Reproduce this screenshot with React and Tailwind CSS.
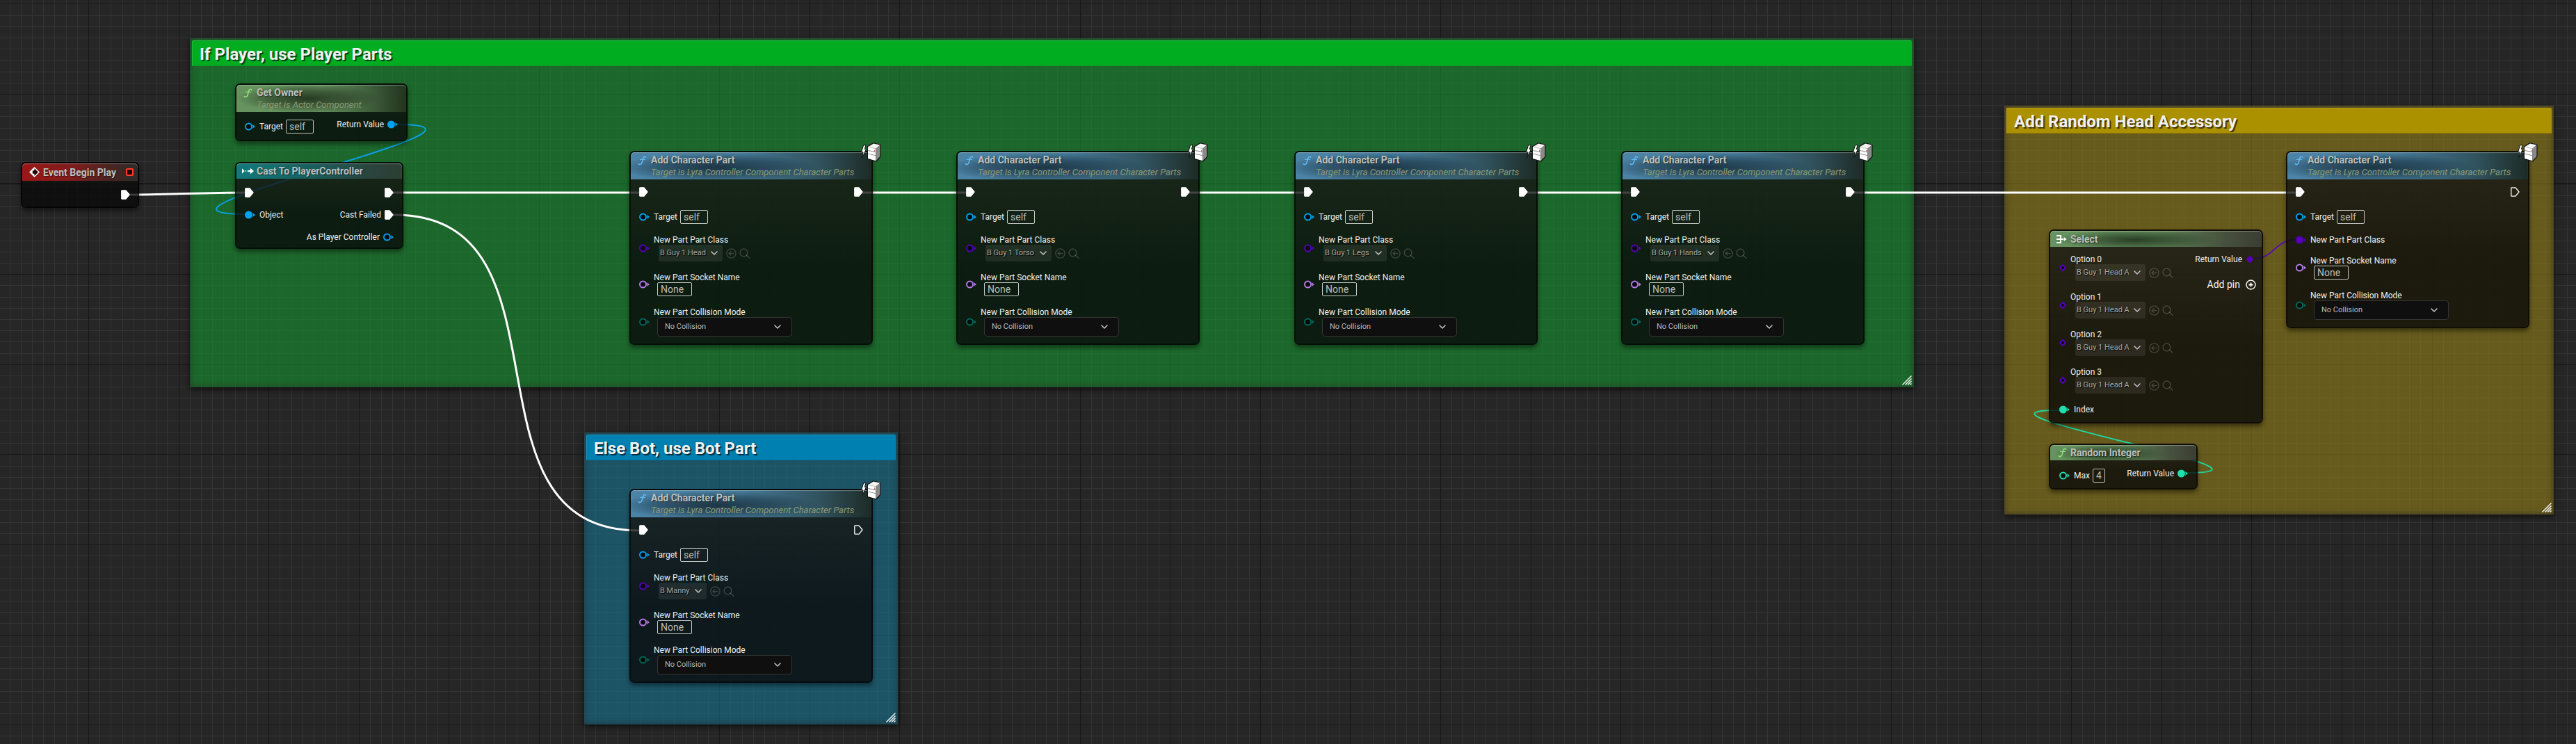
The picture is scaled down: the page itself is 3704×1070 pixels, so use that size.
import { useId } from "react";

/* ---------- canvas geometry ---------- */

const GRID_STEP = 129.6 / 8;
const GRID_W = 4096;
const GRID_H = 2304;

function gridPaths() {
  let minor = "";
  let major = "";
  for (let i = -8; ; i++) {
    const x = Math.round(127 + i * GRID_STEP);
    if (x > GRID_W) break;
    if (x < 0) continue;
    if (i % 8 === 0) major += `M${x} 0h1v${GRID_H}h-1z`;
    else minor += `M${x} 0h1v${GRID_H}h-1z`;
  }
  for (let i = -9; ; i++) {
    const y = Math.round(135 + i * GRID_STEP);
    if (y > GRID_H) break;
    if (y < 0 || i === 8) continue;
    if (i % 8 === 0) major += `M0 ${y}h${GRID_W}v1h${-GRID_W}z`;
    else minor += `M0 ${y}h${GRID_W}v1h${-GRID_W}z`;
  }
  return { minor, major };
}

const GRID = gridPaths();

function Grid() {
  return (
    <svg className="absolute top-0 left-0" width={GRID_W} height={GRID_H} shapeRendering="crispEdges" aria-hidden="true">
      <path d={GRID.minor} fill="#343434" />
      <path d={GRID.major} fill="#181818" />
      <path d={`M0 264h${GRID_W}v1h${-GRID_W}z`} fill="#050505" />
    </svg>
  );
}

function Wires() {
  return (
    <svg className="absolute top-0 left-0" width={GRID_W} height={GRID_H} fill="none" aria-hidden="true">
      <g stroke="#ffffff" strokeWidth="3">
        <path d="M184 280C240 280 290 277 356 277" />
        <path d="M564 277H922" />
        <path d="M1236 277H1392" />
        <path d="M1706 277H1878" />
        <path d="M2192 277H2348" />
        <path d="M2662 277H3304" />
        <path d="M564 309H567C837 309 649 763 919 763H924" />
      </g>
      <g strokeWidth="2">
        <path d="M566 179H571C773 179 150 308 352 308H356" stroke="#0a9fe0" />
        <path d="M3140 680H3145C3320 680 2786 590 2961 590H2966" stroke="#1fd6a0" />
        <path d="M3236 372H3240C3270 372 3271 345 3301 345H3306" stroke="#5a0fa8" />
      </g>
    </svg>
  );
}

/* ---------- pins and icons ---------- */

const PIN_COLORS = {
  object: "#00a1ee",
  class: "#5500b8",
  name: "#b87be8",
  enum: "#00665a",
  int: "#1fe0ae",
};

function ExecPin({ filled }) {
  return (
    <svg className="shrink-0" width="13" height="14" viewBox="0 0 13 14" aria-hidden="true">
      <path
        d="M1.5 .8H7L12 7L7 13.2H1.5Q.8 13.2 .8 12.5V1.5Q.8 .8 1.5 .8Z"
        fill={filled ? "#ffffff" : "none"}
        stroke="#ffffff"
        strokeWidth="1.3"
        strokeLinejoin="round"
      />
    </svg>
  );
}

function Pin({ type, filled }) {
  const color = PIN_COLORS[type];
  return (
    <svg className="shrink-0" width="15" height="12" viewBox="0 0 15 12" aria-hidden="true">
      <circle cx="5.5" cy="6" r="4.5" fill={filled ? color : "#040a08"} stroke={color} strokeWidth="2" />
      <path d="M11.2 3L15 6L11.2 9Q12.2 6 11.2 3Z" fill={color} />
    </svg>
  );
}

function DiamondPin({ filled }) {
  return (
    <svg className="shrink-0" width="10" height="12" viewBox="0 0 10 12" aria-hidden="true">
      <path
        d="M5 2L9 6L5 10L1 6Z"
        fill={filled ? PIN_COLORS.class : "#040a08"}
        stroke={PIN_COLORS.class}
        strokeWidth="2"
      />
    </svg>
  );
}

function FunctionIcon({ color }) {
  return (
    <svg className="shrink-0" width="13" height="14" viewBox="0 0 13 14" fill="none" stroke={color} aria-hidden="true">
      <path d="M11.6 2.2Q11.4 1.2 10.2 1.2Q8.2 1.2 7.4 4.6L6.2 9.4Q5.4 12.6 3 12.6Q1.6 12.6 1.3 11.6" strokeWidth="1.6" strokeLinecap="round" />
      <path d="M3.6 5.4H10.2" strokeWidth="1.4" strokeLinecap="round" />
    </svg>
  );
}

function EventIcon() {
  return (
    <svg className="shrink-0" width="15" height="15" viewBox="0 0 15 15" aria-hidden="true">
      <path d="M7.5 1L14 7.5L7.5 14L1 7.5Z" fill="#240505" stroke="#ffffff" strokeWidth="1.5" strokeLinejoin="round" />
      <path d="M7.5 1V5.3H4.8V9.7H7.5V14L1 7.5Z" fill="#ffffff" />
      <path d="M7.5 4.2L10.8 7.5L7.5 10.8V9H5.4V6H7.5Z" fill="#240505" />
    </svg>
  );
}

function CastIcon() {
  return (
    <svg className="shrink-0" width="17" height="10" viewBox="0 0 17 10" aria-hidden="true">
      <path d="M0 1.2L3.6 5L0 8.8Z" fill="#ffffff" />
      <path d="M4.4 4H6V6H4.4ZM6.8 4H8.4V6H6.8Z" fill="#ffffff" opacity=".6" />
      <path d="M9 3.8H12V.8L17 5L12 9.2V6.2H9Z" fill="#ffffff" />
    </svg>
  );
}

function SelectIcon() {
  return (
    <svg className="shrink-0" width="15" height="14" viewBox="0 0 15 14" aria-hidden="true">
      <path d="M0 1H7V6H10V8H7V13H0V11H5V8H0V6H5V3H0Z" fill="#ffffff" />
      <path d="M10.6 4L14.6 7L10.6 10Z" fill="#ffffff" />
    </svg>
  );
}

function Chevron() {
  return (
    <svg className="pointer-events-none shrink-0" width="10" height="6" viewBox="0 0 10 6" fill="none" aria-hidden="true">
      <path d="M1 1L5 5L9 1" stroke="#c0c0c0" strokeWidth="1.6" strokeLinecap="round" strokeLinejoin="round" />
    </svg>
  );
}

function UseSelectedIcon() {
  return (
    <svg width="15" height="15" viewBox="0 0 15 15" fill="none" stroke="currentColor" strokeWidth="1.4" strokeLinecap="round" strokeLinejoin="round" aria-hidden="true">
      <circle cx="7.5" cy="7.5" r="6.6" />
      <path d="M11 7.5H4.2M6.6 4.9L4 7.5L6.6 10.1" />
    </svg>
  );
}

function BrowseIcon() {
  return (
    <svg width="16" height="15" viewBox="0 0 16 15" fill="none" stroke="currentColor" strokeWidth="1.5" strokeLinecap="round" aria-hidden="true">
      <circle cx="6.5" cy="6.5" r="5.4" />
      <path d="M10.6 10.4L15 14.2" />
    </svg>
  );
}

function AddPinIcon() {
  return (
    <svg width="15" height="15" viewBox="0 0 15 15" fill="none" stroke="#ffffff" aria-hidden="true">
      <circle cx="7.5" cy="7.5" r="6.5" strokeWidth="1.4" />
      <path d="M7.5 4.4V10.6M4.4 7.5H10.6" strokeWidth="1.8" />
    </svg>
  );
}

function ServerBadge() {
  return (
    <svg className="absolute -top-[14px] -right-[14px]" width="32" height="32" viewBox="0 0 32 32" aria-hidden="true">
      <path d="M6.6 4L10 3.4L8.4 9.4L10.4 9.8L4.8 21.6L6 14L3.6 13.6Z" fill="#ffffff" stroke="#101010" strokeWidth="1" strokeLinejoin="round" />
      <path d="M13 6L21 1.4L30.4 3.6V20L24.6 26.4L13 23Z" fill="#151515" stroke="#151515" strokeWidth="2.4" strokeLinejoin="round" />
      <path d="M13 6.2L21 1.4L30.4 3.6L24.4 8.8Z" fill="#f4f4f4" />
      <path d="M13 6.2L24.4 8.8V26.2L13 23Z" fill="#ffffff" />
      <path d="M24.4 8.8L30.4 3.6V20L24.4 26.2Z" fill="#8a8a8a" />
      <path d="M13.4 11.4L24 13.8M13.4 16.2L24 18.6" stroke="#8c8c8c" strokeWidth="1" />
      <path d="M13 6.2L24.4 8.8" stroke="#c4c4c4" strokeWidth=".8" />
      <path d="M22.6 10.4V13" stroke="#d06060" strokeWidth="1" />
    </svg>
  );
}

/* ---------- form controls ---------- */

function TextValue({ id, value, className }) {
  return (
    <input
      id={id}
      defaultValue={value}
      className={`h-5 rounded-[2px] border border-[#c4c8c4] bg-transparent pl-1 text-sm leading-none text-[#b9bdb9] outline-none ${className}`}
    />
  );
}

function ClassPicker({ id, value, className }) {
  return (
    <div className="ml-[7px] flex items-center gap-[5px]">
      <div className={`relative flex h-6 items-center rounded-[3px] bg-white/8 ${className}`}>
        <select
          id={id}
          defaultValue={value}
          className="h-6 w-full appearance-none bg-transparent pl-[2px] text-[11px] text-[#a4a8a4] outline-none [text-shadow:1px_1px_1px_#000]"
        >
          <option>{value}</option>
        </select>
        <span className="pointer-events-none absolute right-[7px]">
          <Chevron />
        </span>
      </div>
      <div className="flex gap-1 text-white/18">
        <button type="button" aria-label="Use selected asset">
          <UseSelectedIcon />
        </button>
        <button type="button" aria-label="Browse to asset">
          <BrowseIcon />
        </button>
      </div>
    </div>
  );
}

function ModePicker({ id }) {
  return (
    <div className="relative ml-[5px] flex h-7 w-[194px] items-center rounded border border-[#333533] bg-[#0f0f0f]">
      <select
        id={id}
        defaultValue="No Collision"
        className="h-full w-full appearance-none bg-transparent pl-[10px] text-[11px] text-[#b9b9b9] outline-none"
      >
        <option>No Collision</option>
      </select>
      <span className="pointer-events-none absolute right-[15px]">
        <Chevron />
      </span>
    </div>
  );
}

/* ---------- node shell ---------- */

const HEADERS = {
  blue: "bg-[radial-gradient(ellipse_42%_52%_at_36%_56%,rgba(26,50,64,.95),rgba(26,50,64,.55)_55%,rgba(26,50,64,0)),linear-gradient(90deg,#4c84a8,#457a99_45%,#31535f_78%,#1d2b26)]",
  green: "bg-[radial-gradient(ellipse_42%_52%_at_42%_50%,rgba(36,54,32,.95),rgba(36,54,32,.55)_55%,rgba(36,54,32,0)),linear-gradient(90deg,#66945f,#638f5d_50%,#3d5c3a_80%,#22331f)]",
  greenThin: "bg-[radial-gradient(ellipse_38%_60%_at_40%_56%,rgba(36,54,32,.9),rgba(36,54,32,.45)_55%,rgba(36,54,32,0)),linear-gradient(90deg,#66945f,#5d8558_50%,#47523e_82%,#3b3d32)]",
  teal: "bg-[linear-gradient(90deg,#127a7c,#1a5e5e_45%,#2a443e_80%,#2c3f34)]",
  red: "bg-[linear-gradient(90deg,#9c1616,#7c1c1c_45%,#4a2422_75%,#2c2c2a)]",
};

function Node({ place, tone, headerLayout, header, children, badge }) {
  return (
    <section
      className={`absolute rounded-[7px] border-2 border-black/85 bg-[linear-gradient(180deg,rgba(26,26,24,.80),rgba(10,10,10,.80)_60%)] bg-clip-padding shadow-[0_4px_6px_rgba(0,0,0,.45)] ${place}`}
    >
      <header className={`flex rounded-t-[5px] shadow-[inset_0_1px_1px_rgba(255,255,255,.35)] ${HEADERS[tone]} ${headerLayout}`}>{header}</header>
      {children}
      {badge && <ServerBadge />}
    </section>
  );
}

function NodeTitle({ children }) {
  return <h3 className="text-sm leading-[18px] font-bold whitespace-nowrap text-[#bcc0be] [text-shadow:1px_1px_1px_rgba(0,0,0,.5)]">{children}</h3>;
}

function FunctionHeader({ title, subtitle, color }) {
  return (
    <>
      <span className="pt-[3px]">
        <FunctionIcon color={color} />
      </span>
      <div>
        <NodeTitle>{title}</NodeTitle>
        <p className="text-[13px] leading-[18px] whitespace-nowrap text-[#8d9a72] italic">{subtitle}</p>
      </div>
    </>
  );
}

const TALL_HEADER = "h-[39px] gap-[6px] pt-[2px] pl-[10px]";
const LABEL = "text-xs leading-[14px] whitespace-nowrap text-[#f0f0f0]";

/* ---------- nodes ---------- */

function SelfTarget() {
  const id = useId();
  return (
    <div className="flex items-center gap-[6px]">
      <Pin type="object" />
      <div className="flex items-center gap-1">
        <label htmlFor={id} className={LABEL}>Target</label>
        <TextValue id={id} value="self" className="w-10" />
      </div>
    </div>
  );
}

function CharacterPartNode({ place, part, partWidth, connectedClass, execOut = true }) {
  const id = useId();
  return (
    <Node
      place={`w-[350px] ${place}`}
      badge
      tone="blue"
      headerLayout={TALL_HEADER}
      header={<FunctionHeader title="Add Character Part" subtitle="Target is Lyra Controller Component Character Parts" color="#62b8f0" />}
    >
      <div className="flex flex-col gap-4 px-3 pt-2 pb-[10px]">
        <div className="flex h-5 items-center justify-between">
          <ExecPin filled />
          <ExecPin filled={execOut} />
        </div>
        <SelfTarget />
        {connectedClass ? (
          <div className="flex items-center gap-[6px]">
            <Pin type="class" filled />
            <span className={LABEL}>New Part Part Class</span>
          </div>
        ) : (
          <div className="flex items-center gap-[6px]">
            <Pin type="class" />
            <div className="flex flex-col">
              <label htmlFor={`${id}-class`} className={LABEL}>New Part Part Class</label>
              <ClassPicker id={`${id}-class`} value={part} className={partWidth} />
            </div>
          </div>
        )}
        <div className="flex items-center gap-[6px]">
          <Pin type="name" />
          <div className="flex flex-col">
            <label htmlFor={`${id}-socket`} className={LABEL}>New Part Socket Name</label>
            <TextValue id={`${id}-socket`} value="None" className="ml-[5px] w-[50px]" />
          </div>
        </div>
        <div className="flex items-center gap-[6px]">
          <Pin type="enum" />
          <div className="flex flex-col">
            <label htmlFor={`${id}-mode`} className={LABEL}>New Part Collision Mode</label>
            <ModePicker id={`${id}-mode`} />
          </div>
        </div>
      </div>
    </Node>
  );
}

function EventNode() {
  return (
    <Node
      place="top-[233px] left-[30px] w-[170px]"
      tone="red"
      headerLayout="h-[25px] items-center gap-[5px] pr-[6px] pl-[10px]"
      header={
        <>
          <EventIcon />
          <NodeTitle>Event Begin Play</NodeTitle>
          <span className="ml-auto h-[11px] w-[11px] rounded-[2px] border-2 border-[#ff3b30] bg-[#200404]" />
        </>
      }
    >
      <div className="flex justify-end pt-[13px] pr-[11px] pb-[10px]">
        <ExecPin filled />
      </div>
    </Node>
  );
}

function GetOwnerNode() {
  return (
    <Node
      place="top-[120px] left-[338px] w-[248px]"
      tone="green"
      headerLayout={TALL_HEADER}
      header={<FunctionHeader title="Get Owner" subtitle="Target is Actor Component" color="#8fe07c" />}
    >
      <div className="flex items-start justify-between px-3 pt-[11px] pb-[9px]">
        <SelfTarget />
        <div className="flex items-center gap-[5px]">
          <span className={LABEL}>Return Value</span>
          <Pin type="object" filled />
        </div>
      </div>
    </Node>
  );
}

function CastNode() {
  return (
    <Node
      place="top-[233px] left-[338px] w-[242px]"
      tone="teal"
      headerLayout="h-[22px] items-center gap-1 pl-2"
      header={
        <>
          <CastIcon />
          <NodeTitle>Cast To PlayerController</NodeTitle>
        </>
      }
    >
      <div className="flex justify-between px-3 pt-3 pb-[7px]">
        <div className="flex flex-col gap-4">
          <div className="flex h-4 items-center">
            <ExecPin filled />
          </div>
          <div className="flex h-4 items-center gap-[6px]">
            <Pin type="object" filled />
            <span className={LABEL}>Object</span>
          </div>
        </div>
        <div className="flex flex-col items-end gap-4">
          <div className="flex h-4 items-center">
            <ExecPin filled />
          </div>
          <div className="flex h-4 items-center gap-[5px]">
            <span className={LABEL}>Cast Failed</span>
            <ExecPin filled />
          </div>
          <div className="flex h-4 items-center gap-[5px]">
            <span className={LABEL}>As Player Controller</span>
            <Pin type="object" />
          </div>
        </div>
      </div>
    </Node>
  );
}

function SelectNode() {
  const id = useId();
  return (
    <Node
      place="top-[330px] left-[2946px] w-[308px]"
      tone="greenThin"
      headerLayout="h-[23px] items-center gap-[5px] pl-[9px]"
      header={
        <>
          <SelectIcon />
          <NodeTitle>Select</NodeTitle>
        </>
      }
    >
      <div className="flex items-start justify-between pt-[11px] pr-3 pb-[11px] pl-[13px]">
        <div className="flex flex-col gap-4">
          {[0, 1, 2, 3].map((n) => (
            <div key={n} className="flex items-center gap-[6px]">
              <DiamondPin />
              <div className="flex flex-col">
                <label htmlFor={`${id}-${n}`} className={LABEL}>{`Option ${n}`}</label>
                <ClassPicker id={`${id}-${n}`} value="B Guy 1 Head A" className="w-[101px]" />
              </div>
            </div>
          ))}
          <div className="flex items-center gap-[6px]">
            <Pin type="int" filled />
            <span className={LABEL}>Index</span>
          </div>
        </div>
        <div className="flex flex-col items-end gap-5">
          <div className="flex items-center gap-[6px]">
            <span className={LABEL}>Return Value</span>
            <DiamondPin filled />
          </div>
          <button type="button" className="-mr-1 flex items-center gap-2 text-sm leading-[18px] text-[#f0f0f0]">
            Add pin
            <AddPinIcon />
          </button>
        </div>
      </div>
    </Node>
  );
}

function RandomIntegerNode() {
  const id = useId();
  return (
    <Node
      place="top-[638px] left-[2946px] w-[214px]"
      tone="greenThin"
      headerLayout="h-[22px] items-center gap-[5px] pl-[11px]"
      header={
        <>
          <FunctionIcon color="#8fe07c" />
          <NodeTitle>Random Integer</NodeTitle>
        </>
      }
    >
      <div className="flex items-start justify-between pt-3 pr-3 pb-2 pl-[13px]">
        <div className="flex items-center gap-[6px]">
          <Pin type="int" />
          <div className="flex items-center gap-1">
            <label htmlFor={id} className={LABEL}>Max</label>
            <TextValue id={id} value="4" className="w-[18px]" />
          </div>
        </div>
        <div className="flex items-center gap-[5px]">
          <span className={LABEL}>Return Value</span>
          <Pin type="int" filled />
        </div>
      </div>
    </Node>
  );
}

/* ---------- comment boxes ---------- */

function CommentBox({ place, bodyClass, titleClass, title }) {
  return (
    <section className={`absolute p-[3px] shadow-[0_3px_8px_rgba(0,0,0,.6),inset_0_0_10px_rgba(38,38,38,.7)] ${place} ${bodyClass}`}>
      <h2 className={`h-[37px] rounded-t-[2px] pl-[11px] text-2xl leading-10 font-bold whitespace-nowrap text-[#f0f0f0] shadow-[inset_1px_1px_0_rgba(255,255,255,.12),inset_0_-1px_0_rgba(0,0,0,.12)] [text-shadow:2px_2px_1px_rgba(0,0,0,.65)] ${titleClass}`}>
        {title}
      </h2>
      <svg className="absolute right-[3px] bottom-[3px]" width="14" height="14" viewBox="0 0 14 14" stroke="#ffffff" strokeWidth="1.4" aria-hidden="true">
        <path d="M0.5 13.5L13.5 .5M4.5 13.5L13.5 4.5M8 13.5L13.5 8M11.5 13.5L13.5 11.5" />
      </svg>
    </section>
  );
}

/* ---------- page ---------- */

export default function App() {
  return (
    <main className="relative min-h-screen w-full overflow-hidden bg-[#262626] font-[Roboto,sans-serif]">
      <Grid />

      <CommentBox
        title="If Player, use Player Parts"
        place="top-[55px] left-[273px] h-[502px] w-[2479px]"
        bodyClass="bg-[rgba(21,146,46,.6)]"
        titleClass="bg-[#00ad21]"
      />
      <CommentBox
        title="Else Bot, use Bot Part"
        place="top-[622px] left-[840px] h-[420px] w-[451px]"
        bodyClass="bg-[rgba(21,115,145,.6)]"
        titleClass="bg-[#0080b0]"
      />
      <CommentBox
        title="Add Random Head Accessory"
        place="top-[152px] left-[2882px] h-[588px] w-[790px]"
        bodyClass="bg-[rgba(145,125,21,.6)]"
        titleClass="bg-[#ab9000]"
      />

      <Wires />

      <EventNode />
      <GetOwnerNode />
      <CastNode />
      <CharacterPartNode place="top-[217px] left-[905px]" part="B Guy 1 Head" partWidth="w-[92px]" />
      <CharacterPartNode place="top-[217px] left-[1375px]" part="B Guy 1 Torso" partWidth="w-[95px]" />
      <CharacterPartNode place="top-[217px] left-[1861px]" part="B Guy 1 Legs" partWidth="w-[91px]" />
      <CharacterPartNode place="top-[217px] left-[2331px]" part="B Guy 1 Hands" partWidth="w-[99px]" />
      <CharacterPartNode place="top-[703px] left-[905px]" part="B Manny" partWidth="w-[69px]" execOut={false} />
      <SelectNode />
      <RandomIntegerNode />
      <CharacterPartNode place="top-[217px] left-[3287px]" connectedClass execOut={false} />
    </main>
  );
}
